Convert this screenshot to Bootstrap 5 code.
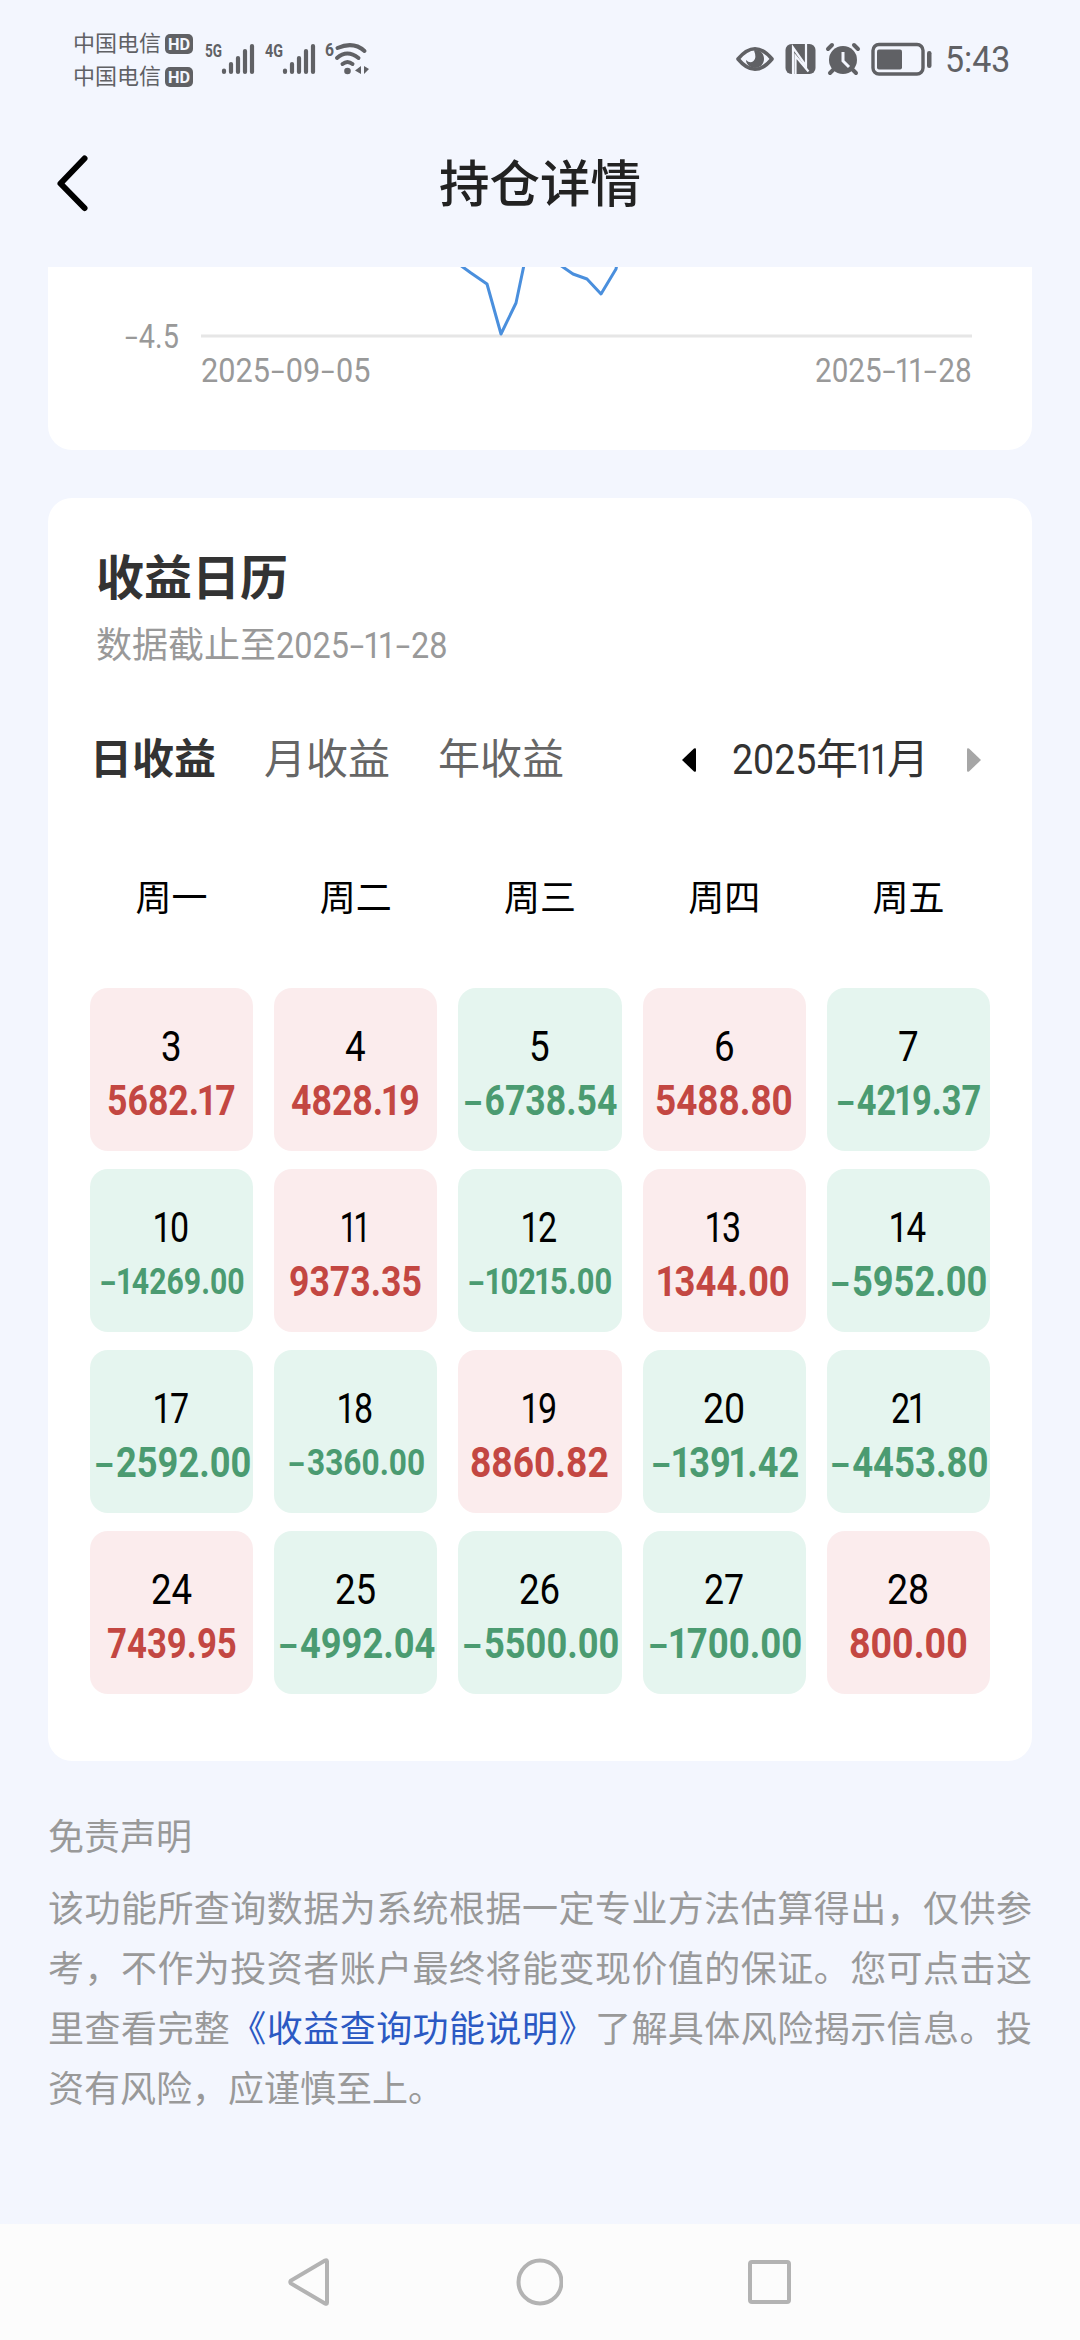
<!DOCTYPE html>
<html lang="zh-CN">
<head>
<meta charset="utf-8">
<meta name="viewport" content="width=device-width, initial-scale=1">
<title>持仓详情</title>
<link href="https://cdn.jsdelivr.net/npm/bootstrap@5.3.0/dist/css/bootstrap.min.css" rel="stylesheet">
<style>
  body { background: #f3f6fe; font-family: Roboto, "Noto Sans CJK SC", sans-serif; width: 1080px; height: 2340px; overflow: hidden; color: #000; }
  svg { display: block; flex: none; }
  .statusbar { height: 118px; padding: 0 70px 0 73px; color: #606165; }
  .carriers { padding-top: 27px; }
  .carrier { height: 33px; font-size: 22px; line-height: 30px; }
  .hd-tag { width: 28px; height: 20px; border-radius: 5px; background: #606165; color: #f3f6fe; font-size: 17px; line-height: 20px; font-weight: 700; margin-left: 4px; }
  .clock { font-size: 36px; line-height: 40px; }
  .titlebar { height: 149px; padding: 0 48px; }
  .titlebar h1 { font-size: 50.5px; line-height: 60px; font-weight: 500; color: #222; padding-top: 13px; }
  .back-slot { width: 60px; padding-top: 36px; }
  .panel { width: 984px; margin: 0 48px; background: #fff; }
  .chart-panel { height: 183px; border-radius: 0 0 24px 24px; padding: 0 60px 0 76px; font-size: 33px; color: #999; }
  .plot { height: 88px; }
  .axis-label { width: 77px; height: 40px; line-height: 40px; margin-top: 50px; }
  .dates { padding-left: 77px; line-height: 36px; height: 36px; margin-top: -2px; }
  .calendar-panel { height: 1263px; margin-top: 48px; border-radius: 24px; padding: 45px 42px 0; }
  .calendar-panel h2 { font-size: 48px; line-height: 72px; font-weight: 700; color: #333; margin: 0 0 0 6px; }
  .asof { font-size: 36px; line-height: 54px; height: 54px; color: #999; margin: 4px 0 0 6px; }
  .tabs { height: 60px; margin-top: 57px; font-size: 42px; line-height: 60px; color: #666; }
  .tabs .chosen { font-weight: 700; color: #333; }
  .tab-list { gap: 48px; }
  .period { color: #333; }
  .period-name { margin: 0 37px 0 35px; }
  .week { display: grid; grid-template-columns: repeat(5, 1fr); column-gap: 21px; }
  .weekdays { margin-top: 82px; font-size: 36px; line-height: 54px; height: 54px; text-align: center; }
  .days { margin-top: 62px; row-gap: 18px; }
  .day { height: 163px; border-radius: 18px; padding-top: 32px; line-height: 54px; text-align: center; font-size: 42px; white-space: nowrap; }
  .day .amount { font-weight: 700; height: 54px; }
  .gain { background: #fbeced; } .gain .amount { color: #c34742; }
  .loss { background: #e5f5ef; } .loss .amount { color: #4b9b71; }
  .day .compact { font-size: 36px; }
  .fit { display: inline-block; text-align: left; white-space: nowrap; }
  .fit > span { display: inline-block; transform-origin: 0 50%; }
  .dash { display: inline-block; transform: scale(1.6, .9); margin: 0 .12em; }
  .one { margin: 0 -.05em 0 -.07em; }
  .note { margin: 50px 48px 0; font-size: 36px; color: #999; }
  .note h3 { font-size: 36px; line-height: 54px; font-weight: 400; margin: 0 0 15px; }
  .note p { line-height: 60px; margin: 0; text-align: justify; }
  .note a { color: #2b59c3; text-decoration: none; }
  .sysnav { height: 116px; background: #fcfcfc; padding: 0 286px; }
</style>
</head>
<body class="d-flex flex-column">
<header>
  <div class="statusbar d-flex justify-content-between">
    <div class="d-flex">
      <div class="carriers">
        <div class="carrier d-flex align-items-center"><span>中国电信</span><span class="hd-tag d-flex justify-content-center"><span class="fit" data-w="22">HD</span></span></div>
        <div class="carrier d-flex align-items-center"><span>中国电信</span><span class="hd-tag d-flex justify-content-center"><span class="fit" data-w="22">HD</span></span></div>
      </div>
      <svg width="178" height="90" viewBox="193 0 178 90" fill="#606165" stroke="#606165" stroke-linecap="round" font-family="Roboto, sans-serif" font-weight="700" font-size="19">
        <g stroke="none">
          <text x="205" y="57" textLength="17" lengthAdjust="spacingAndGlyphs">5G</text>
          <text x="265" y="57" textLength="18" lengthAdjust="spacingAndGlyphs">4G</text>
          <text x="325" y="56" textLength="9" lengthAdjust="spacingAndGlyphs">6</text>
          <circle cx="347.500" cy="71" r="3.300"/>
          <path d="M361 66v8l-6-3.500zM364 66v8l5-5z"/>
        </g>
        <path fill="none" stroke-width="4.200" d="M224 70.500v1.500M231 64v8M238 58v14M245 51v21M252 46v26M285 70.500v1.500M292 64v8M299 58v14M306 51v21M313 46v26"/>
        <path fill="none" stroke-width="4" d="M337.500 48q16-7 27 3M337 58q10-9 21.500 0M342.500 64q5-4 10 0"/>
      </svg>
    </div>
    <div class="d-flex">
      <svg width="209" height="80" viewBox="732 0 209 80" fill="#606165">
        <path d="M738 59q17-20.500 34 0q-17 20.500-34 0z" fill="none" stroke="#606165" stroke-width="3.600" stroke-linejoin="round"/>
        <path d="M755 50c6 0 9 4 9 9s-4 9-9 9-9-4-9-8q4 4 7.500 1t.5-10.500z"/>
        <rect x="785.500" y="44" width="30" height="30" rx="6"/>
        <path d="M793 75V47.500L806 66V43.500" fill="none" stroke="#f3f6fe" stroke-width="2.200"/>
        <path d="M795.500 75V56L808.500 71.500" fill="none" stroke="#f3f6fe" stroke-width="2.200"/>
        <circle cx="843" cy="60" r="14"/>
        <path d="M828 49l4-4M858 49l-4-4M833 70l-3 3M853 70l3 3" stroke="#606165" stroke-width="4" stroke-linecap="round"/>
        <path d="M843 52v9l6 6" fill="none" stroke="#f3f6fe" stroke-width="3"/>
        <rect x="873" y="44.500" width="50" height="29.500" rx="6" fill="none" stroke="#606165" stroke-width="3.400"/>
        <rect x="877" y="49.500" width="25" height="20" rx="2"/>
        <rect x="927" y="51" width="4.500" height="17" rx="2.200"/>
      </svg>
      <div class="clock pt-4 mt-3 ps-1"><span class="fit" data-w="65">5:43</span></div>
    </div>
  </div>
  <div class="titlebar d-flex justify-content-between">
    <div class="back-slot"><svg width="44" height="60" viewBox="0 0 44 60"><path d="M36.500 4.500L12.500 29.500l24 24.500" fill="none" stroke="#000" stroke-width="6" stroke-linecap="round" stroke-linejoin="round"/></svg></div>
    <h1 class="m-0 mt-4">持仓详情</h1>
    <div class="back-slot"></div>
  </div>
</header>

<main class="flex-grow-1">
  <section class="panel chart-panel">
    <div class="plot d-flex">
      <div class="axis-label"><span class="fit" data-w="55">-4.5</span></div>
      <svg width="771" height="74" viewBox="201 267 771 74">
        <path d="M201 336H972" stroke="#e6e6e6" stroke-width="3"/>
        <path d="M460 265l11 8 16 11 14 50 15-31 8-38M560 265l13 9 14 5 14 15 15-25 1-5" fill="none" stroke="#4a8fdd" stroke-width="3" stroke-linejoin="round"/>
      </svg>
    </div>
    <div class="dates d-flex justify-content-between"><span class="fit" data-w="169">2025-09-05</span><span class="fit" data-w="157">2025-11-28</span></div>
  </section>

  <section class="panel calendar-panel">
    <h2>收益日历</h2>
    <div class="asof d-flex">数据截止至<span class="fit" data-w="171">2025-11-28</span></div>
    <div class="tabs d-flex justify-content-between">
      <div class="tab-list d-flex"><span class="chosen">日收益</span><span>月收益</span><span>年收益</span></div>
      <div class="period d-flex align-items-center">
        <svg width="16" height="28" viewBox="0 0 16 28"><path d="M1 14L13 2.500q2-1 2 1v21q0 2-2 1z" fill="#000"/></svg>
        <span class="period-name d-flex"><span class="fit" data-w="84">2025</span>年<span class="fit" data-w="29">11</span>月</span>
        <svg width="24" height="28" viewBox="0 0 24 28"><path d="M15 14L3 2.500q-2-1-2 1v21q0 2 2 1z" fill="#a6a6a6"/></svg>
      </div>
    </div>
    <div class="week weekdays"><span>周一</span><span>周二</span><span>周三</span><span>周四</span><span>周五</span></div>
    <div class="week days" id="days"></div>
  </section>

  <section class="note">
    <h3>免责声明</h3>
    <p>该功能所查询数据为系统根据一定专业方法估算得出，仅供参考，不作为投资者账户最终将能变现价值的保证。您可点击这里查看完整<a href="#">《收益查询功能说明》</a>了解具体风险揭示信息。投资有风险，应谨慎至上。</p>
  </section>
</main>

<footer class="sysnav d-flex align-items-center justify-content-between">
  <svg width="46" height="52" viewBox="0 0 46 52"><path d="M41 5.500v41q0 2-2 1L5 27.500q-1.500-1.500 0-3L39 4.500q2-1 2 1z" fill="none" stroke="#b3b3b3" stroke-width="4"/></svg>
  <svg width="48" height="48" viewBox="0 0 48 48"><circle cx="25" cy="24" r="21.500" fill="none" stroke="#b3b3b3" stroke-width="4"/></svg>
  <svg width="48" height="48" viewBox="0 0 48 48"><rect x="4" y="4" width="39" height="40" rx="2" fill="none" stroke="#b3b3b3" stroke-width="4"/></svg>
</footer>

<script src="https://cdn.jsdelivr.net/npm/bootstrap@5.3.0/dist/js/bootstrap.bundle.min.js"></script>
<script>
  // day, its width, amount, its width
  const records = [
    [3, 21, '5682.17', 129], [4, 21, '4828.19', 129], [5, 21, '-6738.54', 155], [6, 21, '5488.80', 138], [7, 21, '-4219.37', 146],
    [10, 34, '-14269.00', 146, 1], [11, 27, '9373.35', 133], [12, 34, '-10215.00', 145, 1], [13, 34, '1344.00', 132], [14, 35, '-5952.00', 158],
    [17, 34, '-2592.00', 158], [18, 34, '-3360.00', 138, 1], [19, 34, '8860.82', 139], [20, 42, '-1391.42', 149], [21, 34, '-4453.80', 159],
    [24, 41, '7439.95', 130], [25, 41, '-4992.04', 158], [26, 41, '-5500.00', 158], [27, 40, '-1700.00', 155], [28, 42, '800.00', 119]
  ];
  document.getElementById('days').innerHTML = records.map(([d, dw, v, vw, small]) =>
    `<div class="day ${v[0] === '-' ? 'loss' : 'gain'}"><div><span class="fit" data-w="${dw}">${d}</span></div>` +
    `<div class="amount ${small ? 'compact' : ''}"><span class="fit" data-w="${vw}">${v}</span></div></div>`).join('');
  document.querySelectorAll('.fit').forEach(el => {
    el.innerHTML = '<span>' + el.textContent.replace(/-/g, '<span class="dash">-</span>').replace(/1/g, '<span class="one">1</span>') + '</span>';
    const inner = el.firstChild, w = +el.dataset.w;
    const natural = inner.offsetWidth;
    el.style.width = w + 'px';
    inner.style.transform = `scaleX(${w / natural})`;
  });
</script>
</body>
</html>
